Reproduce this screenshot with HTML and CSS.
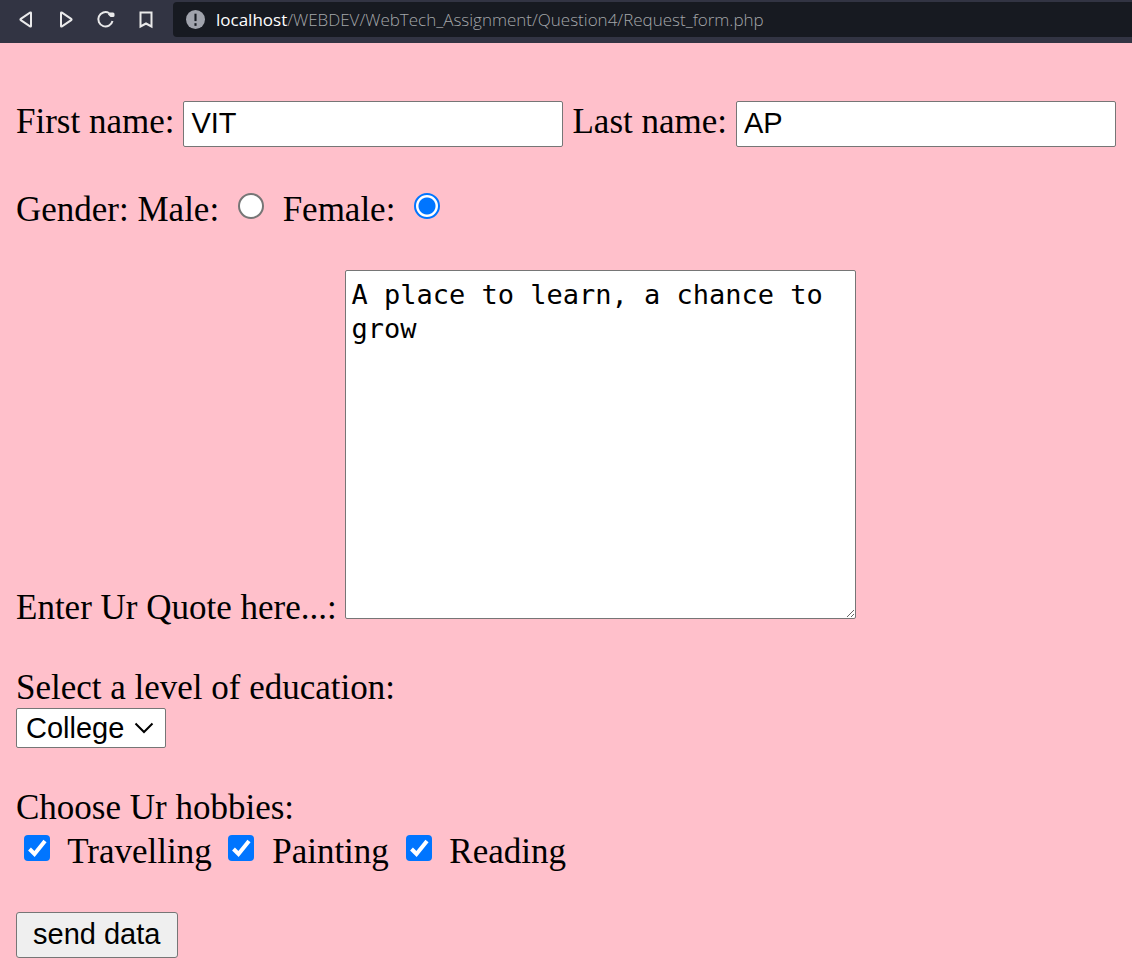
FILE: index.html
```
<!DOCTYPE html>
<html lang="en">
<head>
<meta charset="utf-8">
<title>Request form</title>
<link rel="stylesheet" href="styles.css">
</head>
<body>
<header class="toolbar">
  <nav class="nav">
    <button class="nav-button" type="button" aria-label="Back"><svg viewBox="0 0 20 20"><path d="M15 3v13q0 1-1 .4L4.800 10.100q-.8-.6 0-1.200L14 2.600q1-.6 1 .4Z"/></svg></button>
    <button class="nav-button" type="button" aria-label="Forward"><svg viewBox="0 0 20 20"><path d="M5 3v13q0 1 1 .4l9.200-6.300q.8-.6 0-1.200L6 2.600q-1-.6-1 .4Z"/></svg></button>
    <button class="nav-button" type="button" aria-label="Reload"><svg viewBox="0 0 20 20"><path d="M13 3A7.200 7.200 0 1 0 16.500 11"/><path class="solid" d="M12.500 2.500h4.500q1.500 0 1.500 1.500v1.500q0 1.500-1.500 1.500h-2.500l-2.500-2.500Z"/></svg></button>
    <button class="nav-button" type="button" aria-label="Bookmark"><svg viewBox="0 0 20 20"><path d="M4.500 2.500h11v14L10 13.500l-5.500 3Z"/></svg></button>
  </nav>
  <div class="address">
    <svg class="info" viewBox="0 0 18 18"><circle cx="9" cy="9" r="9"/><path d="M9 3.500v7"/><path d="M9 12.500v2.500"/></svg>
    <a class="url" href="#"><span class="host">localhost</span>/WEBDEV/WebTech_Assignment/Question4/Request_form.php</a>
  </div>
</header>
<main>
<form class="form">
  <div class="row names">
    <label for="first">First name:</label>
    <input class="text" id="first" type="text" value="VIT">
    <label for="last">Last name:</label>
    <input class="text" id="last" type="text" value="AP">
  </div>
  <div class="row">
    Gender: <label for="male">Male:</label> <input class="radio" id="male" type="radio" name="gender">
    <label for="female">Female:</label> <input class="radio" id="female" type="radio" name="gender" checked>
  </div>
  <div class="row">
    <label for="quote">Enter Ur Quote here...:</label>
    <textarea class="quote" id="quote">A place to learn, a chance to grow</textarea>
  </div>
  <div class="row stack">
    <label for="education">Select a level of education:</label>
    <select class="select" id="education"><option>College</option></select>
  </div>
  <fieldset class="row hobbies">
    <legend class="legend">Choose Ur hobbies:</legend>
    <div class="options">
      <input class="check" id="travel" type="checkbox" checked> <label for="travel">Travelling</label>
      <input class="check" id="paint" type="checkbox" checked> <label for="paint">Painting</label>
      <input class="check" id="read" type="checkbox" checked> <label for="read">Reading</label>
    </div>
  </fieldset>
  <button class="send" type="submit">send data</button>
</form>
</main>
</body>
</html>
```
FILE: styles.css
```
* { box-sizing: border-box; }
html { background: #ffc0cb; }
body {
  margin: 0;
  color: #000;
  font: 35px/40px "Liberation Serif", "Times New Roman", serif;
}
.toolbar {
  display: flex;
  align-items: center;
  height: 43px;
  padding: 2px 0 6px 16px;
  background: #323443;
}
.nav { display: flex; gap: 20px; margin-right: 17px; }
.nav-button {
  width: 20px;
  height: 20px;
  padding: 0;
  border: 0;
  background: none;
}
.nav-button svg { display: block; fill: none; stroke: #e9e9ea; stroke-width: 2; }
.nav-button .solid { fill: #e9e9ea; stroke: none; }
.address {
  display: flex;
  flex: 1;
  align-items: center;
  gap: 11px;
  height: 35px;
  padding-left: 13px;
  border-radius: 4px 0 0 4px;
  background: #171a21;
  min-width: 0;
}
.info { flex: none; width: 19px; height: 19px; fill: #a0a3ac; stroke: #171a21; stroke-width: 2; }
.info circle { stroke: none; }
.url {
  overflow: hidden;
  color: #a4a6a9;
  font: 300 17px/24px "Open Sans", "Noto Sans", sans-serif;
  text-decoration: none;
  white-space: nowrap;
}
.host { color: #fff; font-weight: 400; }
.form { padding: 58px 16px 16px; }
.row { margin: 0 0 40px; }
.names { display: flex; align-items: baseline; gap: 9px; margin-bottom: 43px; }
.text {
  flex: 1;
  min-width: 0;
  height: 46px;
  padding: 0 7px 2px;
  border: 1px solid #767676;
  border-radius: 2px;
  background: #fff;
  font: 29px/34px "Liberation Sans", Arial, sans-serif;
}
.radio {
  width: 26px;
  height: 26px;
  margin: 0 10px 2px;
  appearance: none;
  border: 2px solid #767676;
  border-radius: 50%;
  background: #fff;
}
.radio:checked {
  border-color: #0075ff;
  background: radial-gradient(circle, #0075ff 8px, #fff 9px);
}
.quote {
  width: 511px;
  max-width: 100%;
  height: 349px;
  padding: 7px 5px;
  border: 1px solid #767676;
  border-radius: 2px;
  font: 27px/34px "DejaVu Sans Mono", monospace;
  vertical-align: baseline;
}
.stack { display: flex; flex-direction: column; align-items: flex-start; }
.select {
  width: 150px;
  height: 40px;
  padding: 0 9px;
  border: 1px solid #767676;
  border-radius: 2px;
  appearance: none;
  background: #fff url("data:image/svg+xml,%3Csvg xmlns='http://www.w3.org/2000/svg' width='20' height='12'%3E%3Cpath d='M1.500 1.500 10 10l8.500-8.500' fill='none' stroke='black' stroke-width='2'/%3E%3C/svg%3E") right 11px center no-repeat;
  color: #000;
  font: 29px/36px "Liberation Sans", Arial, sans-serif;
}
.hobbies { padding: 0; border: 0; min-width: 0; }
.legend { padding: 0; }
.options { padding-top: 4px; }
.check {
  width: 26px;
  height: 26px;
  margin: 0 9px 2px 8px;
  appearance: none;
  border: 2px solid #767676;
  border-radius: 4px;
  background: #fff;
}
.check:checked {
  border: 0;
  background: #0075ff url("data:image/svg+xml,%3Csvg xmlns='http://www.w3.org/2000/svg' width='26' height='26'%3E%3Cpath d='M5.500 14l5 5L21 6' fill='none' stroke='white' stroke-width='4'/%3E%3C/svg%3E") center no-repeat;
}
.send {
  height: 46px;
  padding: 0 17px 2px 16px;
  border: 1px solid #767676;
  border-radius: 3px;
  background: #efefef;
  color: #000;
  font: 29px/34px "Liberation Sans", Arial, sans-serif;
}
```
